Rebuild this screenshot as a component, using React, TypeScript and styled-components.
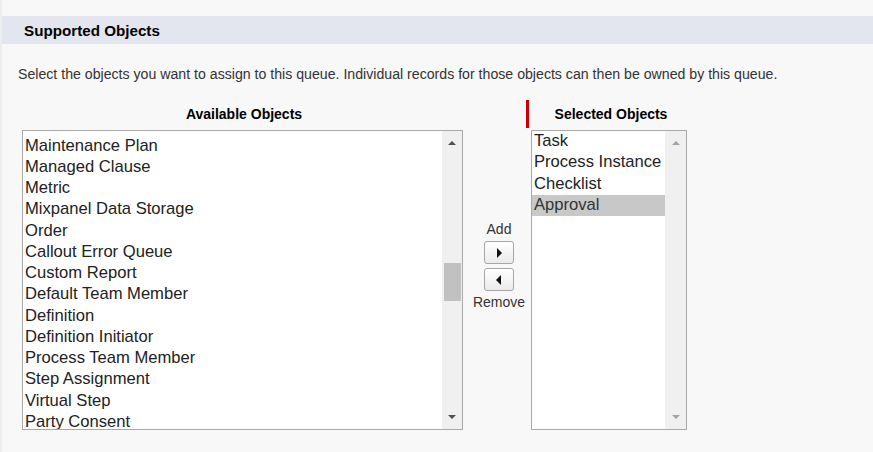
import React from 'react';
import styled, { createGlobalStyle } from 'styled-components';

const Global = createGlobalStyle`
  html, body { margin: 0; padding: 0; background: #f8f8f8; }
  body { font-family: "Liberation Sans", Arial, sans-serif; color: #222; }
`;

const Page = styled.div`
  width: 873px;
  height: 452px;
  box-sizing: border-box;
  padding-top: 16px;
  border-left: 2px solid #ededed;
  overflow: hidden;
`;

const SectionHeader = styled.h3`
  margin: 0;
  height: 28px;
  background: #e3e6ee;
  display: flex;
  align-items: center;
  padding-left: 22px;
  font-size: 15.2px;
  font-weight: bold;
  color: #000;
`;

const Description = styled.p`
  margin: 22px 0 0 16px;
  font-size: 14.15px;
  line-height: 16px;
  color: #333;
  white-space: nowrap;
`;

const DuelList = styled.div`
  display: flex;
  align-items: flex-start;
  margin: 18px 0 0 20px;
`;

const Column = styled.div<{ $width: number }>`
  display: flex;
  flex-direction: column;
  width: ${(p) => p.$width}px;
`;

const ColumnHeader = styled.div<{ $required?: boolean; $shift?: number }>`
  height: 28px;
  margin-bottom: 2px;
  display: flex;
  align-items: center;
  justify-content: center;
  font-size: 14px;
  font-weight: bold;
  color: #000;
  box-sizing: border-box;
  padding-left: ${(p) => p.$shift ?? 0}px;
  border-left: ${(p) => (p.$required ? '3px solid #c00' : 'none')};
`;

const ListBox = styled.div<{ $inset?: number }>`
  height: 300px;
  box-sizing: border-box;
  margin-left: ${(p) => p.$inset ?? 0}px;
  border: 1px solid #a9a9a9;
  background: #fff;
  display: flex;
  overflow: hidden;
`;

const Options = styled.div<{ $offset: number }>`
  flex: 1;
  padding-top: ${(p) => p.$offset}px;
  overflow: hidden;
`;

const Option = styled.div<{ $selected?: boolean }>`
  height: 21.25px;
  line-height: 19px;
  padding-left: 2px;
  font-size: 16.6px;
  white-space: nowrap;
  background: ${(p) => (p.$selected ? '#c8c8c8' : 'transparent')};
  color: ${(p) => (p.$selected ? '#333' : '#222')};
`;

const ScrollBar = styled.div<{ $width: number }>`
  width: ${(p) => p.$width}px;
  background: #f0f0f0;
  display: flex;
  flex-direction: column;
`;

const ArrowSlot = styled.div`
  height: 24px;
  display: flex;
  align-items: center;
  justify-content: center;
`;

const ArrowUp = styled.div<{ $color: string }>`
  width: 0;
  height: 0;
  border-left: 4px solid transparent;
  border-right: 4px solid transparent;
  border-bottom: 4px solid ${(p) => p.$color};
`;

const ArrowDown = styled.div<{ $color: string }>`
  width: 0;
  height: 0;
  border-left: 4px solid transparent;
  border-right: 4px solid transparent;
  border-top: 4px solid ${(p) => p.$color};
`;

const Track = styled.div`
  flex: 1;
  display: flex;
  flex-direction: column;
`;

const Thumb = styled.div<{ $top: number; $height: number }>`
  margin: ${(p) => p.$top}px 1px 0 2px;
  height: ${(p) => p.$height}px;
  background: #c1c1c1;
`;

const ButtonColumn = styled.div`
  width: 63px;
  box-sizing: border-box;
  padding: 121px 0 0 9px;
  display: flex;
  flex-direction: column;
  align-items: center;
  font-size: 14px;
  color: #333;
`;

const ButtonLabel = styled.div<{ $gapTop?: number }>`
  line-height: 16px;
  margin-top: ${(p) => p.$gapTop ?? 0}px;
`;

const MoveButton = styled.button<{ $gapTop: number }>`
  width: 30px;
  height: 23px;
  margin-top: ${(p) => p.$gapTop}px;
  padding: 0;
  border: 1px solid #a6a6a6;
  border-radius: 3px;
  background: linear-gradient(#ffffff, #ebebeb);
  display: flex;
  align-items: center;
  justify-content: center;
`;

const TriRight = styled.span`
  width: 0;
  height: 0;
  border-top: 5px solid transparent;
  border-bottom: 5px solid transparent;
  border-left: 5px solid #111;
  margin-left: 1px;
`;

const TriLeft = styled.span`
  width: 0;
  height: 0;
  border-top: 5px solid transparent;
  border-bottom: 5px solid transparent;
  border-right: 5px solid #111;
  margin-right: 1px;
`;

const available = [
  'Maintenance Plan',
  'Managed Clause',
  'Metric',
  'Mixpanel Data Storage',
  'Order',
  'Callout Error Queue',
  'Custom Report',
  'Default Team Member',
  'Definition',
  'Definition Initiator',
  'Process Team Member',
  'Step Assignment',
  'Virtual Step',
  'Party Consent',
];

const selected = ['Task', 'Process Instance', 'Checklist', 'Approval'];

export default function App() {
  return (
    <>
      <Global />
      <Page>
        <SectionHeader>Supported Objects</SectionHeader>
        <Description>
          Select the objects you want to assign to this queue. Individual records for those objects can then be owned by this queue.
        </Description>
        <DuelList>
          <Column $width={441}>
            <ColumnHeader $shift={3}>Available Objects</ColumnHeader>
            <ListBox>
              <Options $offset={4.5}>
                {available.map((a) => (
                  <Option key={a}>{a}</Option>
                ))}
              </Options>
              <ScrollBar $width={20}>
                <ArrowSlot>
                  <ArrowUp $color="#505050" />
                </ArrowSlot>
                <Track>
                  <Thumb $top={108} $height={38} />
                </Track>
                <ArrowSlot>
                  <ArrowDown $color="#505050" />
                </ArrowSlot>
              </ScrollBar>
            </ListBox>
          </Column>
          <ButtonColumn>
            <ButtonLabel>Add</ButtonLabel>
            <MoveButton $gapTop={4} aria-label="Add">
              <TriRight />
            </MoveButton>
            <MoveButton $gapTop={4} aria-label="Remove">
              <TriLeft />
            </MoveButton>
            <ButtonLabel $gapTop={3}>Remove</ButtonLabel>
          </ButtonColumn>
          <Column $width={161}>
            <ColumnHeader $required $shift={6}>Selected Objects</ColumnHeader>
            <ListBox $inset={5}>
              <Options $offset={0}>
                {selected.map((s) => (
                  <Option key={s} $selected={s === 'Approval'}>{s}</Option>
                ))}
              </Options>
              <ScrollBar $width={21}>
                <ArrowSlot>
                  <ArrowUp $color="#a3a3a3" />
                </ArrowSlot>
                <Track />
                <ArrowSlot>
                  <ArrowDown $color="#a3a3a3" />
                </ArrowSlot>
              </ScrollBar>
            </ListBox>
          </Column>
        </DuelList>
      </Page>
    </>
  );
}
